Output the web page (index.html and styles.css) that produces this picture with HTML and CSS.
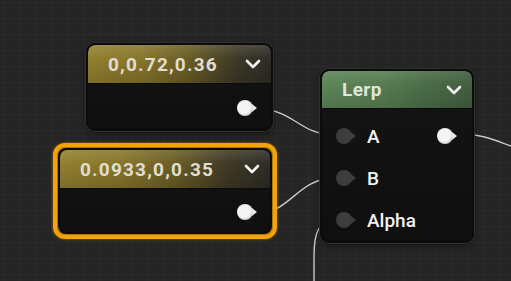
FILE: index.html
```html
<!DOCTYPE html>
<html lang="en">
  <head>
    <meta charset="UTF-8">
    <title>Material Graph</title>
    <link rel="stylesheet" href="styles.css">
  </head>
  <body>
    <div class="graph">
      <!-- wires -->
      <svg class="wires" width="511" height="281" viewBox="0 0 511 281">
        <path d="M257,109 C295,109 298,135 336,135" />
        <path d="M257,213 C292,213 296,178 336,178" />
        <path d="M336,220 C319,220 314,232 314,256 L314,281" />
        <path d="M458,134 C482,134 494,140 511,146" />
      </svg>

      <!-- Constant3Vector node -->
      <div class="node const" style="left:86px;top:43px;width:187px;height:88px">
        <div class="node-head gold">
          <span class="title">0,0.72,0.36</span>
          <svg class="chev" width="16" height="10" viewBox="0 0 16 10"><polyline points="2,2 8,8 14,2" /></svg>
        </div>
        <div class="node-body out-only">
          <span class="pin on"></span>
        </div>
      </div>

      <!-- selected node -->
      <div class="selected" style="left:53px;top:143px;width:224px;height:96px">
        <div class="node const inner">
          <div class="node-head gold">
            <span class="title">0.0933,0,0.35</span>
            <svg class="chev" width="16" height="10" viewBox="0 0 16 10"><polyline points="2,2 8,8 14,2" /></svg>
          </div>
          <div class="node-body out-only">
            <span class="pin on"></span>
          </div>
        </div>
      </div>

      <!-- Lerp node -->
      <div class="node lerp" style="left:320px;top:69px;width:154px;height:174px">
        <div class="node-head green">
          <span class="title">Lerp</span>
          <svg class="chev" width="16" height="10" viewBox="0 0 16 10"><polyline points="2,2 8,8 14,2" /></svg>
        </div>
        <div class="node-body rows">
          <div class="row">
            <span class="pin"></span><span class="label">A</span>
            <span class="pin on right"></span>
          </div>
          <div class="row">
            <span class="pin"></span><span class="label">B</span>
          </div>
          <div class="row">
            <span class="pin"></span><span class="label">Alpha</span>
          </div>
        </div>
      </div>
    </div>
  </body>
</html>
```

FILE: styles.css
```css
body {
  margin: 0;
  background-color: #252525;
  font-family: 'Roboto', 'Liberation Sans', sans-serif;
  overflow: hidden;
}

.graph {
  position: relative;
  width: 511px;
  height: 281px;
  background-color: #252525;
  background-image:
    linear-gradient(to right, rgba(255,255,255,0.025) 1px, transparent 1px),
    linear-gradient(to bottom, rgba(255,255,255,0.025) 1px, transparent 1px);
  background-size: 16px 16px;
  background-position: 4px 2px;
}

.wires {
  position: absolute;
  left: 0;
  top: 0;
}

.wires path {
  fill: none;
  stroke: #c9c9c9;
  stroke-width: 1.4;
}

/* nodes */
.node {
  position: absolute;
  display: flex;
  flex-direction: column;
  box-sizing: border-box;
  background: linear-gradient(to bottom, #141414, #0f0f0f);
  border: 2px solid #0b0b0b;
  border-radius: 9px;
  box-shadow: 0 0 0 1px #303030, 0 2px 6px rgba(0,0,0,0.5);
  overflow: hidden;
}

.selected {
  position: absolute;
  box-sizing: border-box;
  border: 4px solid #f2a20a;
  border-radius: 12px;
  padding: 1px;
  display: flex;
  box-shadow: 0 0 3px rgba(240,150,0,0.6);
  background-color: #b57408;
}

.node.inner {
  position: static;
  flex: 1;
  border-radius: 8px;
  box-shadow: none;
}

.node-head {
  height: 38px;
  flex-shrink: 0;
  display: flex;
  align-items: center;
  justify-content: space-between;
  padding: 0 10px 0 20px;
  border-radius: 7px 7px 0 0;
  border-bottom: 1px solid #0a0a0a;
}

.node-head.gold {
  background:
    linear-gradient(to bottom, rgba(255,255,255,0.12), rgba(255,255,255,0) 35%, rgba(0,0,0,0.15)),
    linear-gradient(90deg, #93802f 0%, #86752b 30%, #6a5d25 55%, #3f3a27 80%, #2e2c26 100%);
}

.node-head.green {
  height: 37px;
  background:
    linear-gradient(to bottom, rgba(255,255,255,0.1), rgba(255,255,255,0) 35%, rgba(0,0,0,0.12)),
    linear-gradient(90deg, #5d8557 0%, #577d51 40%, #4b6c47 70%, #425e3f 100%);
}

.title {
  color: #e0ddd2;
  font-size: 19px;
  font-weight: 700;
  letter-spacing: 1.2px;
}

.green .title {
  color: #dfe6dc;
  letter-spacing: 0.4px;
}

.chev polyline {
  fill: none;
  stroke: #f4f4f4;
  stroke-width: 2.6;
  stroke-linecap: round;
  stroke-linejoin: round;
}

.node-body {
  flex: 1;
  display: flex;
}

.out-only {
  align-items: center;
  justify-content: flex-end;
  padding: 2px 13px 0 0;
}

.inner .out-only {
  padding-right: 12px;
}

.rows {
  flex-direction: column;
  padding: 6px 14px 0 14px;
}

.row {
  height: 42px;
  display: flex;
  align-items: center;
}

.label {
  color: #f2f2f2;
  font-size: 19px;
  font-weight: 500;
  margin-left: 10px;
}

.pin.right {
  margin-left: auto;
}

/* pins */
.pin {
  position: relative;
  width: 16px;
  height: 16px;
  border-radius: 50%;
  background-color: #3d3d3d;
  margin-right: 5px;
}

.pin::after {
  content: '';
  position: absolute;
  left: 15px;
  top: 4px;
  border-left: 5px solid #3d3d3d;
  border-top: 4px solid transparent;
  border-bottom: 4px solid transparent;
}

.pin.on {
  background-color: #f4f4f4;
  box-shadow: inset -1px -1px 2px rgba(0,0,0,0.2);
}

.pin.on::after {
  border-left-color: #e8e8e8;
}
```
